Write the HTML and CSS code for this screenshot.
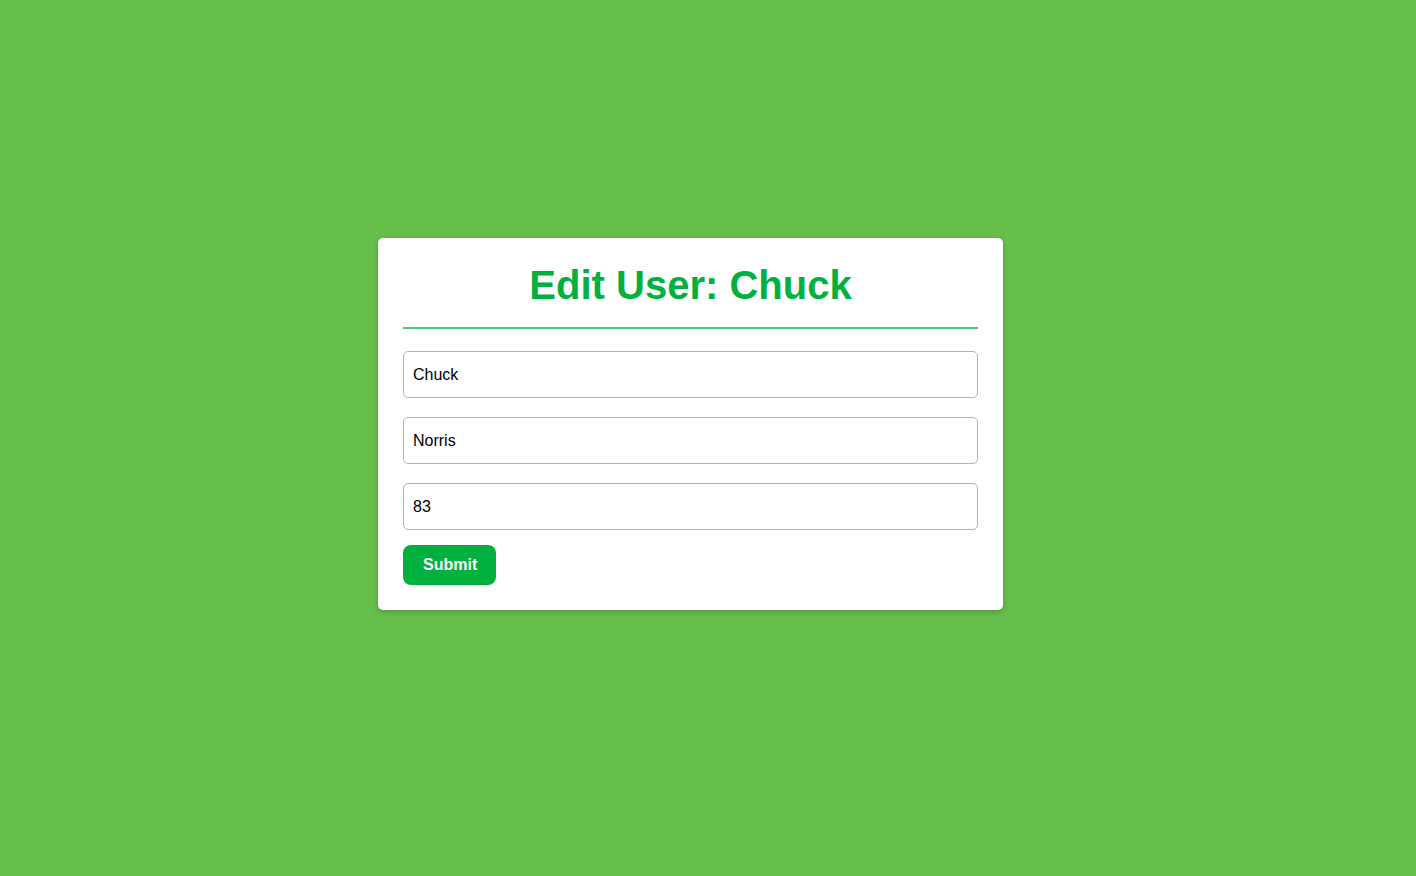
FILE: index.html
```html
<!DOCTYPE html>
<html lang="en">
<head>
<meta charset="utf-8">
<title>Edit User</title>
<link rel="stylesheet" href="styles.css">
</head>
<body>
<main class="page">
  <form class="card">
    <h1 class="title">Edit User: Chuck</h1>
    <input class="field" type="text" value="Chuck">
    <input class="field" type="text" value="Norris">
    <input class="field field-last" type="text" value="83">
    <button class="submit" type="button">Submit</button>
  </form>
</main>
</body>
</html>
```
FILE: styles.css
```css
html, body {
  margin: 0;
  padding: 0;
  background: #67bf4b;
  font-family: "Liberation Sans", Arial, sans-serif;
}

.page {
  min-height: 876px;
  box-sizing: border-box;
  padding: 238px 0 0 378px;
}

.card {
  width: 625px;
  box-sizing: border-box;
  padding: 25px;
  background: #ffffff;
  border-radius: 5px;
  box-shadow: 0 2px 6px rgba(0, 0, 0, 0.22);
  display: flex;
  flex-direction: column;
  align-items: flex-start;
}

.title {
  align-self: stretch;
  margin: 0 0 22px;
  padding: 0 0 20px;
  font-size: 40px;
  line-height: 44px;
  font-weight: bold;
  color: #00b140;
  text-align: center;
  border-bottom: 2px solid #50c878;
}

.field {
  align-self: stretch;
  height: 47px;
  box-sizing: border-box;
  margin: 0 0 19px;
  padding: 1px 9px 0;
  border: 1px solid #b3b3b3;
  border-radius: 5px;
  font-family: "Liberation Sans", Arial, sans-serif;
  font-size: 16px;
  color: #000000;
  background: #ffffff;
  outline: none;
}

.field-last {
  margin-bottom: 15px;
}

.submit {
  height: 40px;
  padding: 0 19px 0 20px;
  border: none;
  border-radius: 8px;
  background: #00b140;
  color: #ffffff;
  font-family: "Liberation Sans", Arial, sans-serif;
  font-size: 16px;
  font-weight: bold;
  cursor: pointer;
}
```
